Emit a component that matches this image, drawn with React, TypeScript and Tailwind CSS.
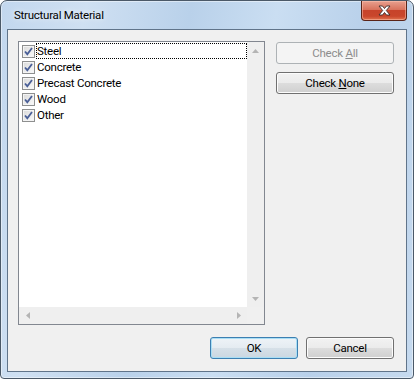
import React from 'react';

const items = ['Steel', 'Concrete', 'Precast Concrete', 'Wood', 'Other'];

function CheckBox() {
  return (
    <div className="flex h-[13px] w-[13px] shrink-0 items-center justify-center border border-[#8e8f8f] bg-gradient-to-br from-[#d9d9d9] to-[#fbfbfb] shadow-[inset_0_0_0_1px_#f4f4f4]">
      <svg width="9" height="9" viewBox="0 0 9 9">
        <path d="M1 4.5 L3.3 7.2 L8 1" fill="none" stroke="#4a5f97" strokeWidth="1.8" />
      </svg>
    </div>
  );
}

function Arrow({ dir }: { dir: 'up' | 'down' | 'left' | 'right' }) {
  const pts = {
    up: '0,4 3.5,0 7,4',
    down: '0,0 7,0 3.5,4',
    left: '4,0 4,7 0,3.5',
    right: '0,0 4,3.5 0,7',
  }[dir];
  const vert = dir === 'up' || dir === 'down';
  return (
    <svg width={vert ? 7 : 4} height={vert ? 4 : 7} viewBox={vert ? '0 0 7 4' : '0 0 4 7'}>
      <polygon points={pts} fill="#b4b4b4" />
    </svg>
  );
}

function Button({
  children,
  disabled,
  primary,
  className,
}: {
  children: React.ReactNode;
  disabled?: boolean;
  primary?: boolean;
  className?: string;
}) {
  let look =
    'border-[#707070] bg-[linear-gradient(#f2f2f2,#ebebeb_50%,#dddddd_50%,#cfcfcf)] text-black shadow-[inset_0_0_0_1px_#fcfcfc]';
  if (disabled) look = 'border-[#adb2b5] bg-[#f4f4f4] text-[#8d8d8d]';
  if (primary)
    look =
      'border-[#3c7fb1] bg-[linear-gradient(#eef3f7,#e4ebf1_50%,#d6e0e8_50%,#cbd7e1)] text-black shadow-[inset_0_0_0_1px_#a9def5]';
  return (
    <div
      className={`flex h-[22px] items-center justify-center rounded-[3px] border text-[11.5px] leading-[16px] ${look} ${className ?? ''}`}
    >
      {children}
    </div>
  );
}

export default function App() {
  return (
    <div
      className="relative flex h-[379px] w-[414px] flex-col rounded-t-[7px] rounded-b-[4px] border border-[#4b5968] bg-[linear-gradient(100deg,#c2d7ee_0%,#cfe0f2_18%,#b9d1ea_40%,#cadef2_58%,#b8d0ea_78%,#c6daef_100%)] px-[6px] pb-[6px] tracking-[-0.25px] shadow-[inset_0_0_0_1px_rgba(255,255,255,0.45)]"
      style={{ fontFamily: 'Roboto, "Noto Sans", sans-serif' }}
    >
      <div className="h-[28px] pl-[7px] pt-[6px] text-[11.5px] leading-[16px] text-black [text-shadow:0_0_6px_rgba(255,255,255,0.9)]">
        Structural Material
      </div>

      <div className="absolute left-[360px] top-0 flex h-[20px] w-[46px] items-center justify-center rounded-b-[4px] border border-t-0 border-[#5a2418] bg-[linear-gradient(#e8a08f,#d9735d_45%,#c7432a_50%,#c9462b_80%,#e0734f)] shadow-[inset_0_0_0_1px_rgba(255,200,180,0.5)]">
        <svg width="13" height="11" viewBox="0 0 13 11">
          <path
            d="M1 1 H4.5 L6.5 3.5 L8.5 1 H12 L8.3 5.5 L12 10 H8.5 L6.5 7.5 L4.5 10 H1 L4.7 5.5 Z"
            fill="#ffffff"
            stroke="#3b2a28"
            strokeWidth="0.9"
            strokeLinejoin="round"
          />
        </svg>
      </div>

      <div className="flex flex-1 flex-col border border-[#60748a] bg-[#f0f0f0] pb-[12px] pl-[10px] pr-[12px] pt-[11px]">
        <div className="flex gap-[11px]">
          <div className="flex h-[284px] w-[247px] flex-col border border-[#828790] bg-white">
            <div className="flex flex-1">
              <div className="flex-1 pt-[1px]">
                {items.map((it, i) => (
                  <div key={it} className="flex h-[16px] items-center pl-[3px] text-[11.5px] leading-[16px] text-black">
                    <CheckBox />
                    <span
                      className={`ml-[1px] h-[16px] flex-1 pl-[1px] ${
                        i === 0 ? 'outline outline-1 -outline-offset-1 outline-dotted outline-black' : ''
                      }`}
                    >
                      {it}
                    </span>
                  </div>
                ))}
              </div>
              <div className="flex w-[17px] flex-col justify-between bg-[#efefef]">
                <div className="flex h-[17px] items-center justify-center">
                  <Arrow dir="up" />
                </div>
                <div className="flex h-[17px] items-center justify-center">
                  <Arrow dir="down" />
                </div>
              </div>
            </div>
            <div className="flex h-[17px]">
              <div className="flex flex-1 justify-between bg-[#efefef]">
                <div className="flex w-[17px] items-center justify-center">
                  <Arrow dir="left" />
                </div>
                <div className="flex w-[17px] items-center justify-center">
                  <Arrow dir="right" />
                </div>
              </div>
              <div className="w-[17px] bg-[#f0f0f0]" />
            </div>
          </div>

          <div className="mt-[1px] flex w-[118px] flex-col gap-[8px]">
            <Button disabled>
              <span>
                Check <span className="underline">A</span>ll
              </span>
            </Button>
            <Button>
              <span>
                Check <span className="underline">N</span>one
              </span>
            </Button>
          </div>
        </div>

        <div className="mt-[12px] flex justify-end gap-[8px]">
          <Button primary className="w-[88px]">
            OK
          </Button>
          <Button className="w-[88px]">Cancel</Button>
        </div>
      </div>
    </div>
  );
}
